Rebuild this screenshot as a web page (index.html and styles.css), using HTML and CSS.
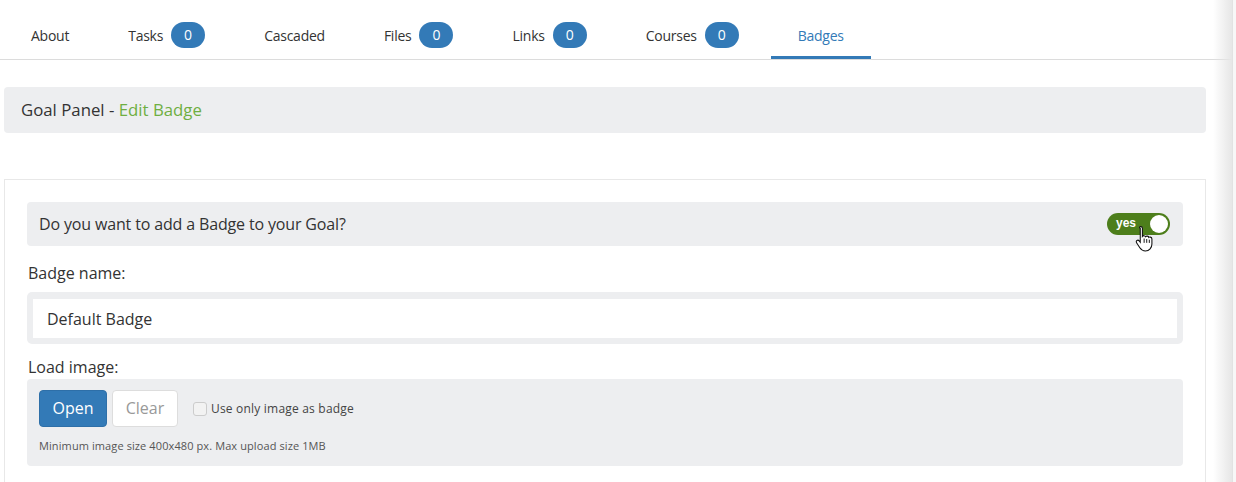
FILE: index.html
```html
<!DOCTYPE html>
<html>
<head>
    <meta charset="UTF-8">
    <title>Goal Panel - Edit Badge</title>
    <link rel="stylesheet" href="styles.css">
</head>
<body>
    <ul class="tabs">
        <li><a href="javascript:;">About</a></li>
        <li><a href="javascript:;">Tasks <span class="count">0</span></a></li>
        <li><a href="javascript:;">Cascaded</a></li>
        <li><a href="javascript:;">Files <span class="count">0</span></a></li>
        <li><a href="javascript:;">Links <span class="count">0</span></a></li>
        <li><a href="javascript:;">Courses <span class="count">0</span></a></li>
        <li class="on"><a href="javascript:;">Badges</a></li>
    </ul>

    <div class="page">
        <div class="panel_head">Goal Panel - <span class="sub">Edit Badge</span></div>

        <div class="card">
            <div class="question">
                <span>Do you want to add a Badge to your Goal?</span>
                <div class="toggle">
                    <span class="toggle_text">yes</span>
                    <span class="knob"></span>
                    <svg class="cursor" width="20" height="27" viewBox="0 0 18 25">
                        <path d="M5 1.5c1 0 1.6.7 1.6 1.6v7.4c.4-.5 1-.7 1.6-.6.7.1 1.1.5 1.3 1 .4-.5 1-.7 1.7-.6.7.1 1.2.6 1.3 1.2.4-.3 1-.4 1.5-.3.9.2 1.4.9 1.4 1.8v4.6c0 3.4-2.4 6.4-6 6.4-2.5 0-4-1.1-5.2-2.9L1.2 16.4c-.5-.8-.3-1.7.4-2.1.7-.4 1.5-.2 2 .4l1 1.3V3.1C3.4 2.2 4 1.5 5 1.5z" fill="#fff" stroke="#111" stroke-width="1"/>
                        <path d="M8.2 12.5v4M10.6 13v3.5M13 13.6v3" stroke="#111" stroke-width="0.9" fill="none"/>
                    </svg>
                </div>
            </div>

            <div class="label">Badge name:</div>
            <div class="input_wrap">
                <input class="input" type="text" value="Default Badge">
            </div>

            <div class="label label_img">Load image:</div>
            <div class="upload">
                <div class="upload_row">
                    <a href="javascript:;" class="btn btn_open">Open</a>
                    <a href="javascript:;" class="btn btn_clear">Clear</a>
                    <label class="check"><span class="box"></span>Use only image as badge</label>
                </div>
                <p class="hint">Minimum image size 400x480 px. Max upload size 1MB</p>
            </div>
        </div>
    </div>

    <div class="edge"></div>
</body>
</html>
```

FILE: styles.css
```css
* {
    margin: 0;
    padding: 0;
    box-sizing: border-box;
}
body {
    font-family: "Open Sans", "Liberation Sans", sans-serif;
    color: #333;
    background: #fff;
    width: 1236px;
    height: 482px;
    overflow: hidden;
    position: relative;
}
a {
    text-decoration: none;
    color: inherit;
}
.tabs {
    list-style: none;
    display: flex;
    gap: 5px;
    padding-left: 4px;
    width: 1234px;
    border-bottom: 1px solid #dcdcdc;
}
.tabs li {
    height: 59px;
    padding: 15px 27px 4px 27px;
    font-size: 14px;
    letter-spacing: -0.25px;
    border-bottom: 3px solid transparent;
}
.tabs li a {
    display: flex;
    align-items: center;
    height: 40px;
}
.tabs li.on {
    border-bottom-color: #337ab7;
}
.tabs li.on a {
    color: #337ab7;
}
.tabs .count {
    display: inline-block;
    width: 34px;
    height: 26px;
    line-height: 26px;
    margin-left: 8px;
    border-radius: 13px;
    background-color: #337ab7;
    color: #fff;
    text-align: center;
    font-size: 14px;
    letter-spacing: 0;
}
.page {
    padding: 27px 30px 0 4px;
}
.panel_head {
    height: 46px;
    line-height: 46px;
    padding-left: 17px;
    background-color: #edeef0;
    border-radius: 4px;
    font-size: 16.8px;
}
.panel_head .sub {
    color: #6fae42;
}
.card {
    margin-top: 46px;
    border: 1px solid #e8e8e8;
    border-bottom: none;
    padding: 22px 22px 30px 22px;
}
.question {
    display: flex;
    justify-content: space-between;
    align-items: center;
    height: 44px;
    padding: 0 13px 0 12px;
    background-color: #edeef0;
    border-radius: 4px;
    font-size: 16px;
    letter-spacing: -0.15px;
}
.toggle {
    position: relative;
    width: 63px;
    height: 22px;
    border-radius: 11px;
    background-color: #4d7e1b;
}
.toggle_text {
    position: absolute;
    left: 9px;
    top: 3px;
    font-family: "Liberation Sans", Arial, sans-serif;
    font-weight: bold;
    font-size: 12px;
    letter-spacing: 0;
    color: #fff;
}
.knob {
    position: absolute;
    right: 2px;
    top: 2px;
    width: 18px;
    height: 18px;
    border-radius: 50%;
    background-color: #fff;
}
.cursor {
    position: absolute;
    left: 28px;
    top: 12px;
}
.label {
    font-size: 16px;
    line-height: 22px;
    margin: 16px 0 8px 1px;
}
.label_img {
    margin: 12px 0 1px 1px;
}
.input_wrap {
    padding: 7px 6px 6px 6px;
    background-color: #edeef0;
    border-radius: 5px;
}
.input {
    display: block;
    width: 100%;
    height: 39px;
    border: none;
    outline: none;
    padding-left: 14px;
    font-family: "Open Sans", "Liberation Sans", sans-serif;
    font-size: 16px;
    color: #333;
    background: #fff;
}
.upload {
    background-color: #edeef0;
    border-radius: 4px;
    padding: 11px 12px 12px 12px;
    height: 87px;
}
.upload_row {
    display: flex;
    align-items: center;
}
.btn {
    display: inline-block;
    height: 37px;
    line-height: 35px;
    border-radius: 4px;
    font-size: 16px;
    text-align: center;
    border: 1px solid transparent;
}
.btn_open {
    width: 68px;
    background-color: #337ab7;
    border-color: #2e6fa8;
    color: #fff;
}
.btn_clear {
    width: 66px;
    margin-left: 5px;
    background-color: #fff;
    border-color: #ddd;
    color: #999;
}
.check {
    display: flex;
    align-items: center;
    margin-left: 15px;
    font-size: 12px;
    letter-spacing: 0.2px;
    color: #444;
}
.check .box {
    display: inline-block;
    width: 14px;
    height: 14px;
    margin-right: 4px;
    border: 1px solid #ccc;
    border-radius: 3px;
    background-color: #f2f2f2;
}
.hint {
    margin-top: 11px;
    font-size: 11px;
    letter-spacing: 0.1px;
    color: #555;
}
.edge {
    position: absolute;
    top: 0;
    right: 0;
    width: 23px;
    height: 482px;
    border-right: 3px solid #f7f7f7;
    background: linear-gradient(to right, rgba(255,255,255,0), #e6e6e6 95%, #dedede);
}
```
